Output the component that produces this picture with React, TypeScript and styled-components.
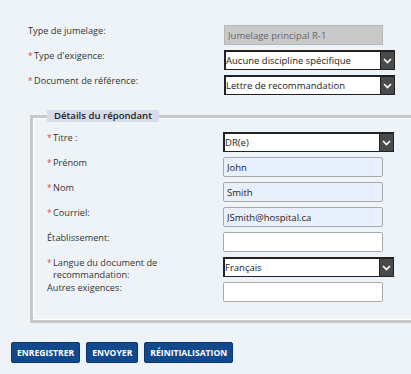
import styled, { createGlobalStyle } from "styled-components";

const GlobalStyle = createGlobalStyle`
  html, body {
    margin: 0;
    overflow: hidden;
    background: #eef3f7;
    font-family: "Open Sans", "Liberation Sans", sans-serif;
  }
  * { box-sizing: border-box; }
`;

const Page = styled.div`
  padding-top: 25px;
  width: 411px;
  color: #333;
`;

const TopSection = styled.div`
  padding-left: 28px;
  margin-bottom: 15px;
`;

const Row = styled.div<{ $labelWidth: number; $tight?: boolean }>`
  display: grid;
  grid-template-columns: ${(p) => p.$labelWidth}px auto;
  align-items: start;
  margin-bottom: ${(p) => (p.$tight ? 1 : 5)}px;

  &:last-child {
    margin-bottom: 0;
  }
`;

const Label = styled.label`
  display: flex;
  align-items: flex-start;
  font-size: 9.2px;
  line-height: 12px;
  color: #333;
`;

const Star = styled.span`
  color: #e04848;
  font-size: 8.5px;
  width: 6px;
  flex-shrink: 0;
`;

const LabelText = styled.span`
  max-width: 110px;
`;

const TextInput = styled.input<{ $filled?: boolean }>`
  width: 160px;
  height: 20px;
  border: 1px solid #a9a9a9;
  border-radius: 2px;
  padding: 0 3px;
  font-family: inherit;
  font-size: 9.5px;
  color: #222;
  background: ${(p) => (p.$filled ? "#e8f0fe" : "#ffffff")};
  outline: none;
`;

const ReadOnlyInput = styled.input`
  width: 159px;
  height: 20px;
  border: 1px solid #b7b7b7;
  padding: 0 3px;
  font-family: inherit;
  font-size: 9.5px;
  color: #666;
  background: #c9c9c9;
  outline: none;
`;

const SelectBox = styled.div`
  display: flex;
  width: 171px;
  height: 20px;
  background: #fff;
  border-style: solid;
  border-color: #222;
  border-width: 2px 1px 1px 2px;
`;

const NativeSelect = styled.select`
  flex: 1;
  min-width: 0;
  appearance: none;
  border: none;
  outline: none;
  background: transparent;
  padding: 0;
  font-family: inherit;
  font-size: 9.5px;
  color: #222;
`;

const Arrow = styled.span`
  width: 14px;
  display: flex;
  align-items: center;
  justify-content: center;
  background: #4a4a4a;
  border-left: 1px solid #222;
`;

const Fieldset = styled.fieldset`
  margin: 0 -20px 0 30px;
  padding: 10px 14px 18px 14px;
  border: 3px solid #c8c8c8;
  box-shadow: inset 1px 1px 0 #fff, inset -1px -1px 0 #fff;
  min-width: 0;
`;

const Legend = styled.legend`
  padding: 0 7px;
  background: #d6dce9;
  font-size: 9.6px;
  font-weight: 600;
  line-height: 12px;
  color: #222;
`;

const ButtonBar = styled.div`
  display: flex;
  gap: 6px;
  padding: 19px 0 0 11px;
`;

const Button = styled.button`
  height: 21px;
  padding: 0 5px;
  background: #12498c;
  border: 1px solid #0a3670;
  border-radius: 2px;
  color: #fff;
  font-family: inherit;
  font-size: 8.6px;
  font-weight: 700;
  cursor: pointer;
`;

function Chevron() {
  return (
    <svg width="9" height="6" viewBox="0 0 9 6">
      <path d="M1 1l3.5 3.5L8 1" fill="none" stroke="#fff" strokeWidth="1.6" />
    </svg>
  );
}

function Select({ value }: { value: string }) {
  return (
    <SelectBox>
      <NativeSelect defaultValue={value}>
        <option>{value}</option>
      </NativeSelect>
      <Arrow>
        <Chevron />
      </Arrow>
    </SelectBox>
  );
}

function FieldLabel({ text, required }: { text: string; required?: boolean }) {
  return (
    <Label>
      {required && <Star>*</Star>}
      <LabelText>{text}</LabelText>
    </Label>
  );
}

function App() {
  return (
    <Page>
      <GlobalStyle />
      <TopSection>
        <Row $labelWidth={196}>
          <FieldLabel text="Type de jumelage:" />
          <ReadOnlyInput readOnly value="Jumelage principal R-1" />
        </Row>
        <Row $labelWidth={196}>
          <FieldLabel text="Type d'exigence:" required />
          <Select value="Aucune discipline spécifique" />
        </Row>
        <Row $labelWidth={196}>
          <FieldLabel text="Document de référence:" required />
          <Select value="Lettre de recommandation" />
        </Row>
      </TopSection>

      <Fieldset>
        <Legend>Détails du répondant</Legend>
        <Row $labelWidth={176}>
          <FieldLabel text="Titre :" required />
          <Select value="DR(e)" />
        </Row>
        <Row $labelWidth={176}>
          <FieldLabel text="Prénom" required />
          <TextInput $filled defaultValue="John" />
        </Row>
        <Row $labelWidth={176}>
          <FieldLabel text="Nom" required />
          <TextInput $filled defaultValue="Smith" />
        </Row>
        <Row $labelWidth={176}>
          <FieldLabel text="Courriel:" required />
          <TextInput $filled defaultValue="JSmith@hospital.ca" />
        </Row>
        <Row $labelWidth={176}>
          <FieldLabel text="Établissement:" />
          <TextInput />
        </Row>
        <Row $labelWidth={176} $tight>
          <FieldLabel text="Langue du document de recommandation:" required />
          <Select value="Français" />
        </Row>
        <Row $labelWidth={176}>
          <FieldLabel text="Autres exigences:" />
          <TextInput />
        </Row>
      </Fieldset>

      <ButtonBar>
        <Button>ENREGISTRER</Button>
        <Button>ENVOYER</Button>
        <Button>RÉINITIALISATION</Button>
      </ButtonBar>
    </Page>
  );
}

export default App;
